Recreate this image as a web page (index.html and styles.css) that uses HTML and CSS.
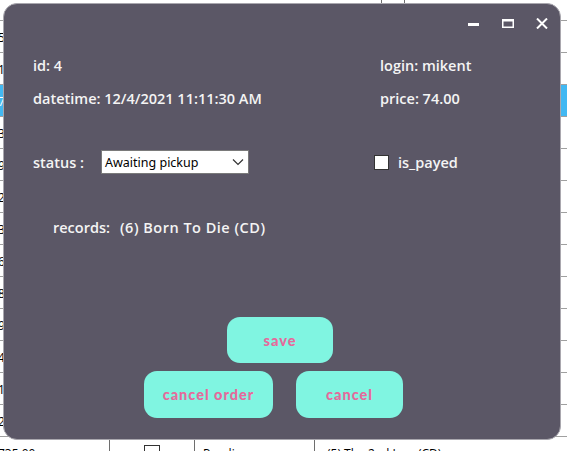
FILE: index.html
```html
<!DOCTYPE html>
<html lang="en">
<head>
  <meta charset="UTF-8" />
  <title>Order</title>
  <link rel="stylesheet" href="styles.css">
</head>
<body>

  <!-- orders grid behind the edit window -->
  <div class="orders">
    <div class="row head"><div class="cell h1"></div><div class="cell h2"></div><div class="cell h3"></div></div>
    <div class="row"><div class="cell c1">510.00</div><div class="cell c2"><span class="tick"></span></div><div class="cell c3">Done</div><div class="cell c4">(1) Origin (CD)</div></div>
    <div class="row"><div class="cell c1">120.00</div><div class="cell c2"><span class="tick"></span></div><div class="cell c3">Done</div><div class="cell c4">(2) Drones (CD)</div></div>
    <div class="row selected"><div class="cell c1">74.00</div><div class="cell c2"><span class="tick"></span></div><div class="cell c3">Awaiting pickup</div><div class="cell c4">(6) Born To Die (CD)</div></div>
    <div class="row"><div class="cell c1">312.00</div><div class="cell c2"><span class="tick"></span></div><div class="cell c3">Pending</div><div class="cell c4">(3) Absolution (CD)</div></div>
    <div class="row"><div class="cell c1">940.00</div><div class="cell c2"><span class="tick"></span></div><div class="cell c3">Pending</div><div class="cell c4">(4) Showbiz (CD)</div></div>
    <div class="row"><div class="cell c1">215.00</div><div class="cell c2"><span class="tick"></span></div><div class="cell c3">Pending</div><div class="cell c4">(1) Origin (CD)</div></div>
    <div class="row"><div class="cell c1">380.00</div><div class="cell c2"><span class="tick"></span></div><div class="cell c3">Pending</div><div class="cell c4">(2) Drones (CD)</div></div>
    <div class="row"><div class="cell c1">645.00</div><div class="cell c2"><span class="tick"></span></div><div class="cell c3">Pending</div><div class="cell c4">(5) The 2nd Law (CD)</div></div>
    <div class="row"><div class="cell c1">810.00</div><div class="cell c2"><span class="tick"></span></div><div class="cell c3">Pending</div><div class="cell c4">(3) Absolution (CD)</div></div>
    <div class="row"><div class="cell c1">90.00</div><div class="cell c2"><span class="tick"></span></div><div class="cell c3">Pending</div><div class="cell c4">(4) Showbiz (CD)</div></div>
    <div class="row"><div class="cell c1">455.00</div><div class="cell c2"><span class="tick"></span></div><div class="cell c3">Pending</div><div class="cell c4">(6) Born To Die (CD)</div></div>
    <div class="row"><div class="cell c1">170.00</div><div class="cell c2"><span class="tick"></span></div><div class="cell c3">Pending</div><div class="cell c4">(1) Origin (CD)</div></div>
    <div class="row"><div class="cell c1">275.00</div><div class="cell c2"><span class="tick"></span></div><div class="cell c3">Pending</div><div class="cell c4">(2) Drones (CD)</div></div>
    <div class="row"><div class="cell c1">735.00</div><div class="cell c2"><span class="tick"></span></div><div class="cell c3">Pending</div><div class="cell c4">(5) The 2nd Law (CD)</div></div>
  </div>

  <div class="dialog">
    <div class="titlebar">
      <svg width="14" height="11" viewBox="0 0 14 11"><rect x="1" y="5" width="11" height="3" fill="#fff"/></svg>
      <svg width="14" height="11" viewBox="0 0 14 11"><rect x="1.75" y="1.75" width="10.5" height="7.5" fill="none" stroke="#fff" stroke-width="1.5"/><rect x="1" y="1" width="12" height="2.5" fill="#fff"/></svg>
      <svg width="14" height="11" viewBox="0 0 14 11"><path d="M2 0.5 L12 10.5 M12 0.5 L2 10.5" stroke="#fff" stroke-width="2"/></svg>
    </div>

    <div class="info">
      <div>id: 4</div>
      <div>login: mikent</div>
      <div>datetime: 12/4/2021 11:11:30 AM</div>
      <div>price: 74.00</div>
    </div>

    <div class="status-row">
      <div class="status">
        <span class="status-label">status :</span>
        <div class="combo">
          <span>Awaiting pickup</span>
          <svg width="12" height="8" viewBox="0 0 12 8"><path d="M1 1.5 L6 6.5 L11 1.5" fill="none" stroke="#333" stroke-width="1.2"/></svg>
        </div>
      </div>
      <label class="payed"><span class="box"></span>is_payed</label>
    </div>

    <div class="records">
      <span class="records-label">records:</span>
      <span class="records-value">(6) Born To Die (CD)</span>
    </div>

    <div class="actions">
      <button class="btn save">save</button>
      <div class="btn-row">
        <button class="btn cancel-order">cancel order</button>
        <button class="btn cancel">cancel</button>
      </div>
    </div>
  </div>

</body>
</html>
```

FILE: styles.css
```css
* { box-sizing: border-box; margin: 0; padding: 0; }

body {
  background-color: #fff;
  font-family: 'Open Sans', 'Noto Sans', sans-serif;
  overflow: hidden;
}

/* grid */
.orders {
  margin-top: -11px;
  width: 567px;
}

.row {
  display: flex;
  height: 32px;
  border-bottom: 1px solid #a0a0a0;
}

.cell {
  font-size: 12px;
  color: #000;
  padding: 8px 4px 0;
  white-space: nowrap;
  overflow: hidden;
  border-right: 1px solid #6e6e6e;
}

.c1 { width: 110px; text-indent: -6px; }
.c2 { width: 85px; display: flex; justify-content: center; }
.c3 { width: 120px; padding-left: 8px; }
.c4 { flex: 1; padding-left: 12px; border-right: none; }

.h1 { width: 382px; }
.h2 { width: 23px; }
.h3 { flex: 1; border-right: none; }

.tick {
  width: 16px;
  height: 16px;
  border: 1px solid #333;
  background: #fff;
}

.row.selected .cell { background-color: #42b8f2; color: #fff; }

/* edit window */
.dialog {
  position: absolute;
  left: 3px;
  top: 3px;
  width: 558px;
  height: 437px;
  background-color: #5b5766;
  border: 1px solid #a9a7ae;
  border-radius: 14px;
  color: #f4f4f4;
  font-weight: 600;
  font-size: 14.5px;
}

.titlebar {
  display: flex;
  justify-content: flex-end;
  gap: 20px;
  padding: 14px 11px 0 0;
  height: 28px;
}

.info {
  display: grid;
  grid-template-columns: 347px 1fr;
  row-gap: 13px;
  line-height: 20px;
  padding: 24px 0 0 29px;
}

.status-row {
  display: grid;
  grid-template-columns: 347px 1fr;
  align-items: center;
  padding-left: 29px;
  margin-top: 41px;
}

.status { display: flex; align-items: center; }

.status-label { width: 68px; }

.combo {
  width: 148px;
  height: 24px;
  background: #fff;
  border: 1px solid #7a7a7a;
  display: flex;
  align-items: center;
  justify-content: space-between;
  padding: 0 4px 0 3px;
  font-family: 'Noto Sans', sans-serif;
  font-weight: 400;
  font-size: 12.5px;
  color: #000;
}

.payed {
  display: flex;
  align-items: center;
  gap: 9px;
  margin-left: -6px;
}

.box {
  width: 15px;
  height: 15px;
  background: #fff;
  border: 1px solid #333;
}

.records {
  display: flex;
  margin-top: 44px;
  padding-left: 49px;
  line-height: 20px;
}

.records-label { width: 67px; }
.records-value { letter-spacing: 0.5px; }

.actions {
  display: flex;
  flex-direction: column;
  align-items: flex-start;
  gap: 8px;
  margin-top: 79px;
  padding-left: 140px;
}

.btn-row { display: flex; gap: 23px; }

.btn {
  background-color: #80f5e1;
  color: #e5699b;
  border: none;
  border-radius: 13px;
  font-family: 'Lato', sans-serif;
  font-weight: 900;
  font-size: 14.5px;
  letter-spacing: 1px;
  height: 47px;
  cursor: pointer;
}

.save { width: 106px; height: 46px; margin-left: 83px; }
.cancel-order { width: 129px; }
.cancel { width: 107px; }
```
